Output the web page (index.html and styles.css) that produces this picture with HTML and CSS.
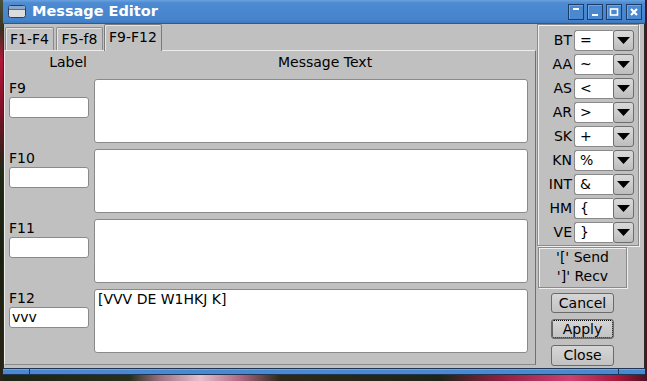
FILE: index.html
```html
<!DOCTYPE html>
<html>
<head>
<meta charset="utf-8">
<link rel="stylesheet" href="styles.css">
</head>
<body>
<div class="desktop">
  <div class="window">
    <div class="titlebar">
      <svg class="appicon" width="18" height="13" viewBox="0 0 18 13">
        <rect x="0.5" y="0.5" width="17" height="12" rx="2" fill="#dcdcdc" stroke="#2a3e58"/>
        <rect x="1" y="1" width="16" height="3" fill="#8aa6c8"/>
        <line x1="1" y1="4.5" x2="17" y2="4.5" stroke="#5b6f88"/>
      </svg>
      <span class="title">Message Editor</span>
      <div class="tbtns">
        <span class="tbtn"><svg width="14" height="14" viewBox="0 0 14 14"><rect x="4" y="3" width="6" height="2" fill="#fff"/></svg></span>
        <span class="tbtn"><svg width="14" height="14" viewBox="0 0 14 14"><rect x="4" y="9" width="6" height="2" fill="#fff"/></svg></span>
        <span class="tbtn"><svg width="14" height="14" viewBox="0 0 14 14"><rect x="3.5" y="4" width="7" height="6" fill="none" stroke="#fff" stroke-width="1.6"/></svg></span>
        <span class="tbtn gap"><svg width="14" height="14" viewBox="0 0 14 14"><path d="M4 4 L10 10 M10 4 L4 10" stroke="#fff" stroke-width="2.2"/></svg></span>
      </div>
    </div>
    <div class="client">
      <div class="tabs">
        <div class="tabbar">
          <div class="tab t1">F1-F4</div>
          <div class="tab t2">F5-f8</div>
          <div class="tab t3 sel">F9-F12</div>
        </div>
        <div class="panel">
          <div class="hdr"><span class="h-label">Label</span><span class="h-text">Message Text</span></div>
          <div class="row">
            <div class="lcol"><div class="fkey">F9</div><div class="field"></div></div>
            <div class="msg"></div>
          </div>
          <div class="row">
            <div class="lcol"><div class="fkey">F10</div><div class="field"></div></div>
            <div class="msg"></div>
          </div>
          <div class="row">
            <div class="lcol"><div class="fkey">F11</div><div class="field"></div></div>
            <div class="msg"></div>
          </div>
          <div class="row">
            <div class="lcol"><div class="fkey">F12</div><div class="field">vvv</div></div>
            <div class="msg">[VVV DE W1HKJ K]</div>
          </div>
        </div>
      </div>
      <div class="side">
        <div class="group">
          <div class="prow"><span class="plabel">BT</span><span class="pinput">=</span><span class="pbtn"><svg width="13" height="7" viewBox="0 0 13 7"><path d="M0 0 H13 L6.5 7 Z" fill="#000"/></svg></span></div>
          <div class="prow"><span class="plabel">AA</span><span class="pinput">~</span><span class="pbtn"><svg width="13" height="7" viewBox="0 0 13 7"><path d="M0 0 H13 L6.5 7 Z" fill="#000"/></svg></span></div>
          <div class="prow"><span class="plabel">AS</span><span class="pinput">&lt;</span><span class="pbtn"><svg width="13" height="7" viewBox="0 0 13 7"><path d="M0 0 H13 L6.5 7 Z" fill="#000"/></svg></span></div>
          <div class="prow"><span class="plabel">AR</span><span class="pinput">&gt;</span><span class="pbtn"><svg width="13" height="7" viewBox="0 0 13 7"><path d="M0 0 H13 L6.5 7 Z" fill="#000"/></svg></span></div>
          <div class="prow"><span class="plabel">SK</span><span class="pinput">+</span><span class="pbtn"><svg width="13" height="7" viewBox="0 0 13 7"><path d="M0 0 H13 L6.5 7 Z" fill="#000"/></svg></span></div>
          <div class="prow"><span class="plabel">KN</span><span class="pinput">%</span><span class="pbtn"><svg width="13" height="7" viewBox="0 0 13 7"><path d="M0 0 H13 L6.5 7 Z" fill="#000"/></svg></span></div>
          <div class="prow"><span class="plabel">INT</span><span class="pinput">&amp;</span><span class="pbtn"><svg width="13" height="7" viewBox="0 0 13 7"><path d="M0 0 H13 L6.5 7 Z" fill="#000"/></svg></span></div>
          <div class="prow"><span class="plabel">HM</span><span class="pinput">{</span><span class="pbtn"><svg width="13" height="7" viewBox="0 0 13 7"><path d="M0 0 H13 L6.5 7 Z" fill="#000"/></svg></span></div>
          <div class="prow"><span class="plabel">VE</span><span class="pinput">}</span><span class="pbtn"><svg width="13" height="7" viewBox="0 0 13 7"><path d="M0 0 H13 L6.5 7 Z" fill="#000"/></svg></span></div>
        </div>
        <div class="note">'[' Send<br>']' Recv</div>
        <div class="btn b-cancel">Cancel</div>
        <div class="btn b-apply">Apply</div>
        <div class="btn b-close">Close</div>
      </div>
    </div>
    <div class="bottom"><span class="seg s1"></span><span class="seg s2"></span><span class="seg s3"></span></div>
  </div>
</div>
</body>
</html>
```

FILE: styles.css
```css
html, body {
  margin: 0;
  padding: 0;
}
body {
  width: 647px;
  height: 381px;
  overflow: hidden;
  font-family: "DejaVu Sans", sans-serif;
  font-size: 14px;
  color: #000;
}
.desktop {
  width: 647px;
  height: 381px;
  box-sizing: border-box;
  padding-left: 3px;
  display: flex;
  background:
    linear-gradient(180deg, #4a5238 0, #3a3020 30px, #b01838 60px, #801028 110px, #202818 170px, #1a2010 260px, #2a2418 381px) 0 0 / 3px 381px no-repeat,
    linear-gradient(90deg, #1c2412 0, #28301a 130px, #a07080 160px, #e8c0cc 200px, #b06880 240px, #302818 280px, #1e2414 440px, #902040 500px, #d04070 570px, #a01838 620px, #501020 647px);
}
.window {
  width: 642px;
  height: 375px;
  display: flex;
  flex-direction: column;
  background: #c0c0c0;
}
.titlebar {
  height: 24px;
  flex: none;
  display: flex;
  align-items: center;
  background: linear-gradient(180deg, #6aa2de 0, #4c8bd2 3px, #4584cd 20px, #3a74b6 24px);
  box-sizing: border-box;
  border-bottom: 1px solid #2f5a8c;
}
.appicon {
  margin-left: 5px;
  margin-top: -1px;
}
.title {
  margin-left: 6px;
  color: #fff;
  font-weight: bold;
  font-size: 14.5px;
  margin-top: -1px;
}
.tbtns {
  margin-left: auto;
  margin-right: 3px;
  display: flex;
  gap: 3px;
}
.tbtn {
  width: 16px;
  height: 16px;
  box-sizing: border-box;
  border: 1px solid #1e3d66;
  background: #4a88cf;
  box-shadow: inset 1px 1px 0 #6ea4e0;
  display: flex;
  align-items: center;
  justify-content: center;
}
.tbtn.gap {
  margin-left: 1px;
}
.client {
  height: 344px;
  flex: none;
  display: flex;
  border-left: 1px solid #2b2b2b;
  border-right: 1px solid #2b2b2b;
}
.tabs {
  width: 533px;
  display: flex;
  flex-direction: column;
}
.tabbar {
  height: 26px;
  display: flex;
  align-items: flex-end;
  padding-left: 1px;
}
.tab {
  height: 23px;
  box-sizing: border-box;
  border: 1px solid #8a8a8a;
  border-bottom: none;
  border-radius: 2px 2px 0 0;
  box-shadow: inset 1px 1px 0 #e6e6e6;
  background: #c2c2c2;
  text-align: center;
  line-height: 22px;
}
.t1 { width: 49px; margin-right: 2px; }
.t2 { width: 47px; margin-right: 1px; }
.t3 { width: 58px; }
.tab.sel {
  height: 27px;
  line-height: 25px;
  margin-bottom: -1px;
  position: relative;
  z-index: 1;
  background: #c0c0c0;
  border-color: #7a7a7a;
}
.panel {
  width: 532px;
  height: 315px;
  box-sizing: border-box;
  border-top: 1px solid #ececec;
  border-left: 1px solid #ececec;
  border-right: 1px solid #707070;
  border-bottom: 1px solid #8a8a8a;
}
.hdr {
  height: 28px;
  display: flex;
  line-height: 22px;
}
.h-label {
  width: 82px;
  text-align: right;
}
.h-text {
  margin-left: 191px;
}
.row {
  display: flex;
  height: 64px;
  margin-bottom: 6px;
}
.lcol {
  margin-left: 4px;
  width: 80px;
}
.fkey {
  height: 18px;
  line-height: 18px;
}
.field {
  height: 21px;
  box-sizing: border-box;
  border: 1px solid #8a8a8a;
  border-radius: 3px;
  background: #fff;
  padding-left: 2px;
  line-height: 19px;
}
.msg {
  margin-left: 5px;
  width: 434px;
  height: 64px;
  box-sizing: border-box;
  border: 1px solid #8a8a8a;
  border-radius: 3px;
  background: #fff;
  padding: 1px 3px;
  line-height: 17px;
}
.side {
  width: 106px;
  display: flex;
  flex-direction: column;
}
.group {
  width: 102px;
  height: 222px;
  box-sizing: border-box;
  border: 1px solid #8a8a8a;
  box-shadow: inset 1px 1px 0 #f0f0f0, 1px 1px 0 #f0f0f0;
  padding-top: 5px;
}
.prow {
  display: flex;
  height: 21px;
  margin-bottom: 3px;
}
.plabel {
  width: 34px;
  text-align: right;
  line-height: 21px;
}
.pinput {
  margin-left: 2px;
  width: 39px;
  box-sizing: border-box;
  border: 1px solid #8a8a8a;
  border-right: none;
  border-radius: 3px 0 0 3px;
  background: #fff;
  padding-left: 5px;
  line-height: 19px;
}
.pbtn {
  width: 21px;
  box-sizing: border-box;
  border: 1px solid #6e6e6e;
  border-radius: 3px;
  background: linear-gradient(180deg, #dadada, #bdbdbd);
  display: flex;
  align-items: center;
  justify-content: center;
}
.note {
  margin-left: 1px;
  margin-top: 1px;
  width: 89px;
  height: 41px;
  box-sizing: border-box;
  border: 1px solid #8a8a8a;
  box-shadow: inset 1px 1px 0 #eeeeee, 1px 1px 0 #eeeeee;
  text-align: center;
  line-height: 19px;
}
.btn {
  margin-left: 14px;
  width: 63px;
  height: 20px;
  box-sizing: border-box;
  border: 1px solid #6a6a6a;
  border-radius: 3px;
  background: linear-gradient(180deg, #d6d6d6, #c2c2c2);
  text-align: center;
  line-height: 18px;
}
.b-cancel { margin-top: 5px; }
.b-apply {
  margin-top: 6px;
  outline: 1px dotted #000;
  outline-offset: -2px;
}
.b-close { margin-top: 6px; height: 21px; line-height: 19px; }
.bottom {
  height: 7px;
  flex: none;
  display: flex;
  box-sizing: border-box;
  border-top: 1px solid #1f3555;
  border-bottom: 1px solid #1f3555;
  background: #4a88cf;
}
.seg {
  height: 5px;
  box-shadow: inset 0 1px 0 #6ea4e0;
}
.s1 { width: 26px; border-right: 1px solid #1f3555; }
.s2 { width: 588px; border-right: 1px solid #1f3555; }
.s3 { flex: 1; }
```
